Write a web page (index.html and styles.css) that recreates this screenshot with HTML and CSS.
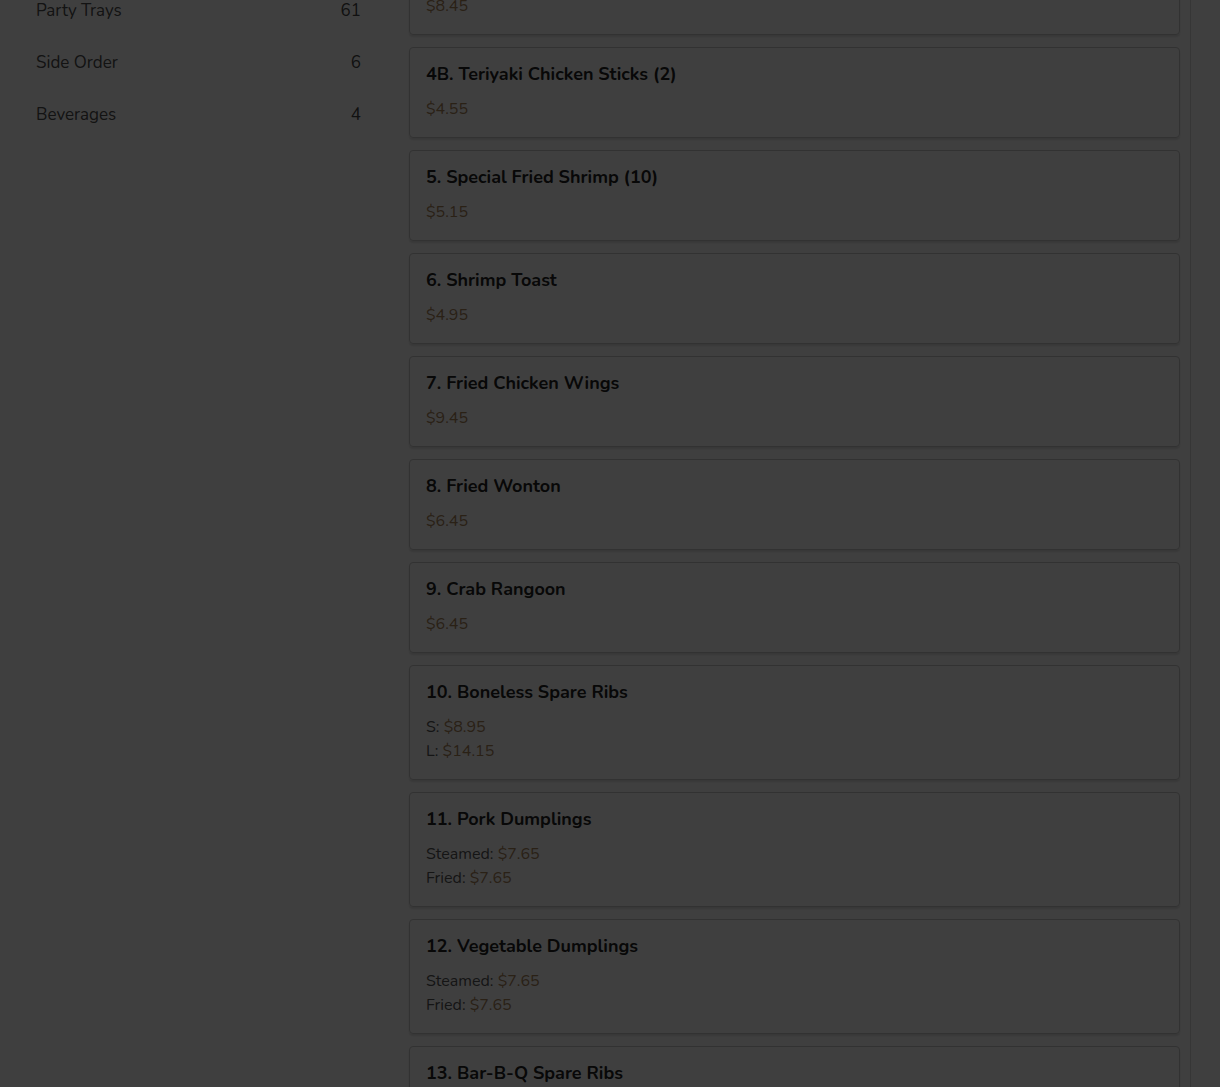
FILE: index.html
```html
<!DOCTYPE html>
<html lang="en">
<head>
<meta charset="utf-8">
<title>Menu</title>
<link rel="stylesheet" href="styles.css">
</head>
<body>
<div class="page">
  <aside class="sidebar">
    <ul class="cats">
      <li class="cat"><span>Party Trays</span><span class="count">61</span></li>
      <li class="cat"><span>Side Order</span><span class="count">6</span></li>
      <li class="cat"><span>Beverages</span><span class="count">4</span></li>
    </ul>
  </aside>
  <main class="menu">
    <div class="items">
      <div class="card">
        <div class="title">4A. Teriyaki Beef Sticks (4)</div>
        <div class="prices"><div class="price">$8.45</div></div>
      </div>
      <div class="card">
        <div class="title">4B. Teriyaki Chicken Sticks (2)</div>
        <div class="prices"><div class="price">$4.55</div></div>
      </div>
      <div class="card">
        <div class="title">5. Special Fried Shrimp (10)</div>
        <div class="prices"><div class="price">$5.15</div></div>
      </div>
      <div class="card">
        <div class="title">6. Shrimp Toast</div>
        <div class="prices"><div class="price">$4.95</div></div>
      </div>
      <div class="card">
        <div class="title">7. Fried Chicken Wings</div>
        <div class="prices"><div class="price">$9.45</div></div>
      </div>
      <div class="card">
        <div class="title">8. Fried Wonton</div>
        <div class="prices"><div class="price">$6.45</div></div>
      </div>
      <div class="card">
        <div class="title">9. Crab Rangoon</div>
        <div class="prices"><div class="price">$6.45</div></div>
      </div>
      <div class="card">
        <div class="title">10. Boneless Spare Ribs</div>
        <div class="prices">
          <div class="line">S: <span class="price">$8.95</span></div>
          <div class="line">L: <span class="price">$14.15</span></div>
        </div>
      </div>
      <div class="card">
        <div class="title">11. Pork Dumplings</div>
        <div class="prices">
          <div class="line">Steamed: <span class="price">$7.65</span></div>
          <div class="line">Fried: <span class="price">$7.65</span></div>
        </div>
      </div>
      <div class="card">
        <div class="title">12. Vegetable Dumplings</div>
        <div class="prices">
          <div class="line">Steamed: <span class="price">$7.65</span></div>
          <div class="line">Fried: <span class="price">$7.65</span></div>
        </div>
      </div>
      <div class="card">
        <div class="title">13. Bar-B-Q Spare Ribs</div>
        <div class="prices">
          <div class="line">S: <span class="price">$9.95</span></div>
          <div class="line">L: <span class="price">$16.45</span></div>
        </div>
      </div>
    </div>
  </main>
</div>
<div class="backdrop"></div>
</body>
</html>
```
FILE: styles.css
```css
html, body {
  margin: 0;
  padding: 0;
  background: #ffffff;
  height: 100%;
  overflow: hidden;
}
body {
  font-family: "Nunito", "Lato", "Noto Sans", sans-serif;
  color: #3a3a3a;
}
.page {
  display: flex;
  align-items: flex-start;
  gap: 48px;
  padding-left: 36px;
}
.sidebar {
  width: 325px;
  flex: none;
}
.cats {
  list-style: none;
  margin: -16px 0 0 0;
  padding: 0;
}
.cat {
  display: flex;
  justify-content: space-between;
  align-items: center;
  height: 52px;
  font-size: 17px;
  color: #4c4c4c;
}
.count {
  color: #444444;
}
.menu {
  width: 771px;
  flex: none;
  padding-right: 10px;
  border-right: 1px solid #d8d8d8;
  min-height: 1200px;
  margin-top: -56px;
}
.items {
  display: flex;
  flex-direction: column;
  gap: 12px;
}
.card {
  border: 1px solid #c8c8c8;
  border-radius: 4px;
  padding: 16px;
  box-shadow: 0 2px 2px rgba(0, 0, 0, 0.12);
  display: flex;
  flex-direction: column;
  gap: 13px;
}
.title {
  font-size: 18px;
  font-weight: 700;
  line-height: 20px;
  color: #222222;
}
.prices {
  font-size: 16px;
  line-height: 24px;
  color: #555555;
}
.price {
  color: #a8845a;
}
.backdrop {
  position: fixed;
  inset: 0;
  background: rgba(0, 0, 0, 0.753);
}
```
